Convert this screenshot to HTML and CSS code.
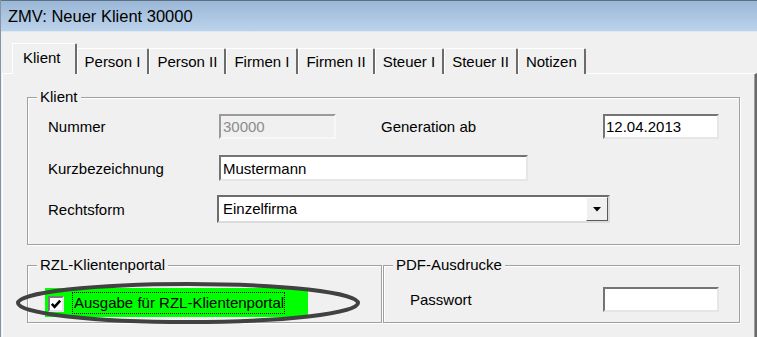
FILE: index.html
```html
<!DOCTYPE html>
<html lang="de">
<head>
    <meta charset="UTF-8">
    <meta name="viewport" content="width=device-width, initial-scale=1.0">
    <title>ZMV: Neuer Klient 30000</title>
    <link rel="stylesheet" href="styles.css">
</head>
<body>
    <div class="window">
        <div class="titlebar">ZMV: Neuer Klient 30000</div>
        <div class="window-body">
            <div class="tabs">
                <div class="tab active">Klient</div>
                <div class="tab">Person I</div>
                <div class="tab">Person II</div>
                <div class="tab">Firmen I</div>
                <div class="tab">Firmen II</div>
                <div class="tab">Steuer I</div>
                <div class="tab">Steuer II</div>
                <div class="tab">Notizen</div>
            </div>
            <div class="panel">
                <fieldset class="group">
                    <legend>Klient</legend>
                    <div class="group-body klient-body">
                        <div class="row row-1">
                            <label class="lbl">Nummer</label>
                            <input class="field field-nummer" value="30000" disabled>
                            <label class="lbl lbl-gen">Generation ab</label>
                            <input class="field field-date" value="12.04.2013">
                        </div>
                        <div class="row row-2">
                            <label class="lbl">Kurzbezeichnung</label>
                            <input class="field field-name" value="Mustermann">
                        </div>
                        <div class="row row-3">
                            <label class="lbl lbl-rf">Rechtsform</label>
                            <div class="combo">
                                <span class="combo-text">Einzelfirma</span>
                                <span class="combo-btn">
                                    <svg width="8" height="5" viewBox="0 0 8 5"><polygon points="0,0 8,0 4,4.5" fill="#000"/></svg>
                                </span>
                            </div>
                        </div>
                    </div>
                </fieldset>

                <div class="group-row">
                    <fieldset class="group group-rzl">
                        <legend>RZL-Klientenportal</legend>
                        <div class="group-body rzl-body">
                            <div class="highlight">
                                <span class="checkbox">
                                    <svg width="12" height="12" viewBox="0 0 12 12"><path d="M1.8 5.8 L4.6 8.8 L10.2 2.6" fill="none" stroke="#000" stroke-width="2.6"/></svg>
                                </span>
                                <span class="check-label">Ausgabe für RZL-Klientenportal</span>
                            </div>
                        </div>
                    </fieldset>
                    <fieldset class="group group-pdf">
                        <legend>PDF-Ausdrucke</legend>
                        <div class="group-body pdf-body">
                            <div class="row">
                                <label class="lbl lbl-pw">Passwort</label>
                                <input class="field field-date" type="password">
                            </div>
                        </div>
                    </fieldset>
                </div>
            </div>
        </div>

        <!-- annotation ring around the checkbox -->
        <svg class="ring" width="344" height="42" viewBox="0 0 344 42">
            <ellipse cx="172" cy="21" rx="170" ry="19" fill="none" stroke="#414141" stroke-width="4"/>
        </svg>
    </div>
</body>
</html>
```

FILE: styles.css
```css
body {
    margin: 0;
    font-family: "Liberation Sans", Arial, sans-serif;
    font-size: 15px;
    color: #000;
    background: #f0f0f0;
}
.window {
    position: relative;
    width: 757px;
    height: 337px;
    overflow: hidden;
    box-sizing: border-box;
    border-left: 1px solid #8595a8;
    background: #f0f0f0;
}
.titlebar {
    height: 32px;
    box-sizing: border-box;
    padding: 1px 0 0 7px;
    border-top: 1px solid #5f6f82;
    border-bottom: 1px solid #dde7f2;
    background: linear-gradient(#9ab7d7, #bcd3eb);
    font-size: 16.5px;
    line-height: 29px;
}
.window-body {
    padding: 11px 0 0 1px;
}
.tabs {
    position: relative;
    z-index: 1;
    display: flex;
    align-items: flex-end;
    height: 31px;
    padding-left: 10px;
    margin-bottom: -1px;
}
.tab {
    height: 26px;
    box-sizing: border-box;
    padding: 0 7px 0 7px;
    border-top: 1px solid #fff;
    border-left: 1px solid #fff;
    border-right: 2px solid #6c6c6c;
    border-top-right-radius: 2px;
    line-height: 25px;
    background: #f0f0f0;
    white-space: nowrap;
}
.tab.active {
    height: 31px;
    padding: 0 14px 0 10px;
    line-height: 27px;
}
.panel {
    height: 270px;
    box-sizing: border-box;
    padding: 15px 15px 0 24px;
    border-top: 1px solid #fff;
    border-left: 1px solid #fff;
    border-right: 2px solid #6a6a6a;
    box-shadow: inset -1px 0 0 #a0a0a0;
}
.group {
    margin: 0;
    padding: 0;
    min-width: 0;
    border: 1px solid #a0a0a0;
    box-shadow: inset 1px 1px 0 #fff, 1px 1px 0 #fff;
}
.group legend {
    margin-left: 9px;
    padding: 0 3px;
    line-height: 16px;
    background: #f0f0f0;
}
.klient-body {
    padding: 9px 0 21px 20px;
}
.row {
    display: flex;
    align-items: center;
}
.row-2 {
    margin-top: 16px;
}
.row-3 {
    margin-top: 14px;
}
.lbl {
    width: 171px;
    flex: none;
}
.lbl-gen {
    width: 222px;
    margin-left: 45px;
}
.lbl-rf {
    width: 169px;
}
.lbl-pw {
    width: 193px;
}
.field {
    height: 25px;
    box-sizing: border-box;
    margin: 0;
    padding: 0 2px;
    border: 2px solid;
    border-color: #747474 #e6e6e6 #e6e6e6 #747474;
    background: #fff;
    font: inherit;
    color: #000;
    outline: none;
}
.field-nummer {
    width: 117px;
    background: #f0f0f0;
    color: #8c8c8c;
    border-color: #9a9a9a #f7f7f7 #f7f7f7 #9a9a9a;
}
.field-date {
    width: 116px;
    padding: 0 1px;
}
.field-name {
    width: 309px;
    height: 26px;
}
.combo {
    display: flex;
    width: 393px;
    height: 28px;
    box-sizing: border-box;
    border: 2px solid;
    border-color: #6d6d6d #dcdcdc #dcdcdc #6d6d6d;
    background: #fff;
}
.combo-text {
    flex: 1;
    padding-left: 4px;
    line-height: 24px;
}
.combo-btn {
    display: flex;
    align-items: center;
    justify-content: center;
    width: 22px;
    box-sizing: border-box;
    border: 1px solid;
    border-color: #fff #5a5a5a #5a5a5a #fff;
    background: #f0f0f0;
}
.group-row {
    display: flex;
    gap: 1px;
    margin-top: 12px;
}
.group-rzl {
    width: 355px;
    flex: none;
    box-sizing: border-box;
}
.group-pdf {
    flex: 1;
}
.rzl-body {
    padding: 15px 0 5px 17px;
}
.highlight {
    display: flex;
    align-items: center;
    width: 263px;
    height: 29px;
    box-sizing: border-box;
    padding-left: 3px;
    background: #00ff00;
}
.checkbox {
    display: flex;
    align-items: center;
    justify-content: center;
    width: 16px;
    height: 16px;
    box-sizing: border-box;
    margin-top: 2px;
    border: 2px solid;
    border-color: #7a7a7a #e4e4e4 #e4e4e4 #7a7a7a;
    background: #fff;
}
.check-label {
    margin-left: 8px;
    padding: 1px 0 1px 1px;
    border: 1px dotted #000;
    line-height: 18px;
}
.pdf-body {
    padding: 14px 0 0 26px;
}
.ring {
    position: absolute;
    left: 15px;
    top: 282px;
}
```
